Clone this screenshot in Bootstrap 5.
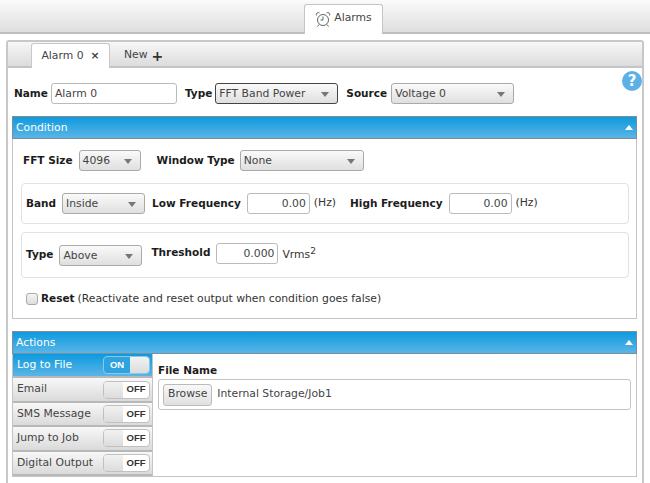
<!DOCTYPE html>
<html lang="en">
<head>
<meta charset="UTF-8" />
<meta name="viewport" content="width=device-width, initial-scale=1.0" />
<title>Alarms</title>
<link rel="stylesheet" href="https://cdn.jsdelivr.net/npm/bootstrap@5.3.3/dist/css/bootstrap.min.css" />
<style>
  html, body { height: 483px; overflow: hidden; }
  body { font-family: "DejaVu Sans", Verdana, sans-serif; font-size: 10.8px; color: #333; background: #fff; }
  b, .lbl { font-weight: 700; font-size: 10.5px; color: #1c1c1c; flex: none; }
  .topbar { height: 34px; padding: 4px 0 0 304px; background: linear-gradient(#fbfbfb, #dedede); border-bottom: 2px solid #bdbdbd; }
  .top-tab { width: 79px; height: 30px; padding-bottom: 2px; background: #fff; border: 1px solid #c4c4c4; border-bottom: 0; border-radius: 3px 3px 0 0; gap: 3px; color: #444; }
  .main { margin: 6px 6px 0 6px; width: 638px; height: 460px; border: 2px solid #c8c8c8; border-bottom: 0; border-radius: 3px 3px 0 0; position: relative; }
  .subbar { height: 26px; padding: 1px 0 0 23px; background: linear-gradient(#f7f7f7, #dcdcdc); border-bottom: 2px solid #c4c4c4; }
  .sub-tab { width: 79px; height: 25px; background: #fff; border: 1px solid #c8c8c8; border-bottom: 0; border-radius: 3px 3px 0 0; gap: 7px; color: #444; }
  .sub-new { margin-left: 14px; gap: 4px; color: #444; padding-top: 2px; }
  .sub-new b { font-size: 14px; line-height: 1; color: #333; }
  .help { position: absolute; top: 29px; right: 0; width: 20px; height: 20px; border-radius: 50%; background: #5cb0e6; color: #fff; font-weight: 700; font-size: 15px; line-height: 20px; text-align: center; }
  .fld { height: 21px; border: 1px solid #bbb; border-radius: 3px; background: #fff; padding: 0 3px; font-size: 10.8px; color: #444; line-height: 19px; flex: none; }
  .sel { height: 21px; border: 1px solid #aaa; border-radius: 3px; background: linear-gradient(#fafafa, #dfdfdf); padding: 0 3px; color: #444; line-height: 19px; position: relative; flex: none; }
  .sel::after { content: ""; position: absolute; right: 8px; top: 8px; border: 4px solid transparent; border-top: 5px solid #777; border-bottom: 0; }
  .sel.active { border: 1px solid #444; }
  .name-row { height: 21px; margin: 15px 0 0 6px; }
  .sec-head { height: 23px; background: linear-gradient(#0d9ade, #5bb5e6); border: 1px solid #7a8f9c; border-top-color: #8a8a8a; color: #fff; padding-left: 3px; position: relative; line-height: 21px; }
  .sec-head::after { content: ""; position: absolute; right: 3px; top: 8px; border: 4px solid transparent; border-bottom: 5px solid #fff; border-top: 0; }
  .sec { margin: 0 5px 0 4px; }
  .sec-body { border: 1px solid #c4c4c4; border-top: 0; }
  .cond { height: 180px; padding-top: 11px; }
  .inset { border: 1px solid #e2e2e2; border-radius: 4px; margin: 0 7px 0 8px; padding-left: 4px; }
  .num { width: 63px; text-align: right; }
  .up { margin-bottom: 4px; }
  .gap-r { margin-right: 6px; }
  .chk { width: 12px; height: 12px; border: 1px solid #aaa; border-radius: 3px; background: linear-gradient(#f5f5f5, #ddd); margin-right: 3px; }
  .acts { height: 123px; }
  .act-list { width: 140px; flex: none; border-right: 1px solid #c4c4c4; }
  .act { height: 24.4px; padding: 0 2px 0 4px; background: linear-gradient(#f8f8f8, #dadada); border-bottom: 2px solid #b8b8b8; color: #444; }
  .act.on { background: linear-gradient(#0d9ade, #5bb5e6); color: #fff; }
  .tog { width: 47px; height: 18px; border: 1px solid #c0c0c0; border-radius: 4px; font-family: "Liberation Sans", Arial, sans-serif; font-size: 9.5px; font-weight: 700; overflow: hidden; background: #fff; color: #333; }
  .tog i { width: 19px; height: 100%; background: linear-gradient(#f2f2f2, #dcdcdc); display: block; flex: none; }
  .tog span { flex: 1; text-align: center; }
  .on .tog { background: #2fa3e0; border-color: #8cc8ea; color: #fff; }
  .file { padding: 9px 5px 0 5px; }
  .file .lbl { display: block; line-height: 14px; }
  .file-box { height: 31px; margin-top: 2px; border: 1px solid #c4c4c4; border-radius: 3px; padding-left: 4px; gap: 5px; color: #444; }
  .browse { height: 22px; padding: 0 4px; border: 1px solid #bbb; border-radius: 3px; background: linear-gradient(#f8f8f8, #e0e0e0); font-size: 10.8px; color: #444; }
  sup { font-size: 9px; top: -.4em; }
</style>
</head>
<body>
  <div class="topbar">
    <div class="top-tab d-flex align-items-center justify-content-center">
      <svg width="16" height="16" viewBox="0 0 16 16" fill="none" stroke="#666" stroke-width="1"><circle cx="8" cy="9" r="5.5"/><path d="M8 5.5V9H5.5M1.5 4.5a2 2 0 0 1 3-2.5M14.5 4.5a2 2 0 0 0-3-2.5M4 13.5l-1.5 2M12 13.5l1.5 2"/></svg>
      Alarms
    </div>
  </div>

  <div class="main">
    <div class="subbar d-flex">
      <div class="sub-tab d-flex align-items-center justify-content-center">Alarm 0 <span class="fw-bold">&times;</span></div>
      <div class="sub-new d-flex align-items-center">New <b>+</b></div>
    </div>
    <div class="help">?</div>

    <div class="name-row d-flex align-items-center">
      <span class="lbl" style="margin-right:3px">Name</span>
      <input class="fld" style="width:126px" value="Alarm 0" />
      <span class="lbl ms-2" style="margin-right:3px">Type</span>
      <div class="sel active" style="width:123px">FFT Band Power</div>
      <span class="lbl ms-2" style="margin-right:4px">Source</span>
      <div class="sel" style="width:123px">Voltage 0</div>
    </div>

    <div class="sec" style="margin-top:12px">
      <div class="sec-head">Condition</div>
      <div class="sec-body cond">
        <div class="d-flex align-items-center" style="margin-left:10px">
          <span class="lbl gap-r">FFT Size</span>
          <div class="sel" style="width:62px">4096</div>
          <span class="lbl" style="margin:0 5px 0 16px">Window Type</span>
          <div class="sel" style="width:124px">None</div>
        </div>
        <div class="inset d-flex align-items-center" style="height:41px;margin-top:12px">
          <span class="lbl gap-r">Band</span>
          <div class="sel" style="width:83px">Inside</div>
          <span class="lbl gap-r" style="margin-left:7px">Low Frequency</span>
          <input class="fld num" value="0.00" />
          <span class="ms-1">(Hz)</span>
          <span class="lbl gap-r" style="margin-left:14px">High Frequency</span>
          <input class="fld num" value="0.00" />
          <span class="ms-1">(Hz)</span>
        </div>
        <div class="inset d-flex align-items-center mt-2" style="height:46px">
          <span class="lbl gap-r">Type</span>
          <div class="sel" style="width:83px">Above</div>
          <span class="lbl gap-r up" style="margin-left:9px">Threshold</span>
          <input class="fld num up" style="width:62px" value="0.000" />
          <span class="ms-1">Vrms<sup>2</sup></span>
        </div>
        <div class="d-flex align-items-center" style="margin:13px 0 0 13px">
          <span class="chk"></span><span class="lbl" style="margin-right:3px">Reset</span> (Reactivate and reset output when condition goes false)
        </div>
      </div>
    </div>

    <div class="sec" style="margin-top:12px">
      <div class="sec-head">Actions</div>
      <div class="sec-body acts d-flex">
        <div class="act-list">
          <div class="act on d-flex align-items-center justify-content-between">Log to File
            <div class="tog d-flex align-items-center"><span>ON</span><i></i></div></div>
          <div class="act d-flex align-items-center justify-content-between">Email
            <div class="tog d-flex align-items-center"><i></i><span>OFF</span></div></div>
          <div class="act d-flex align-items-center justify-content-between">SMS Message
            <div class="tog d-flex align-items-center"><i></i><span>OFF</span></div></div>
          <div class="act d-flex align-items-center justify-content-between">Jump to Job
            <div class="tog d-flex align-items-center"><i></i><span>OFF</span></div></div>
          <div class="act d-flex align-items-center justify-content-between">Digital Output
            <div class="tog d-flex align-items-center"><i></i><span>OFF</span></div></div>
        </div>
        <div class="file flex-grow-1">
          <span class="lbl">File Name</span>
          <div class="file-box d-flex align-items-center">
            <button class="browse" type="button">Browse</button>
            <span>Internal Storage/Job1</span>
          </div>
        </div>
      </div>
    </div>
  </div>

  <script src="https://cdn.jsdelivr.net/npm/bootstrap@5.3.3/dist/js/bootstrap.bundle.min.js"></script>
</body>
</html>
